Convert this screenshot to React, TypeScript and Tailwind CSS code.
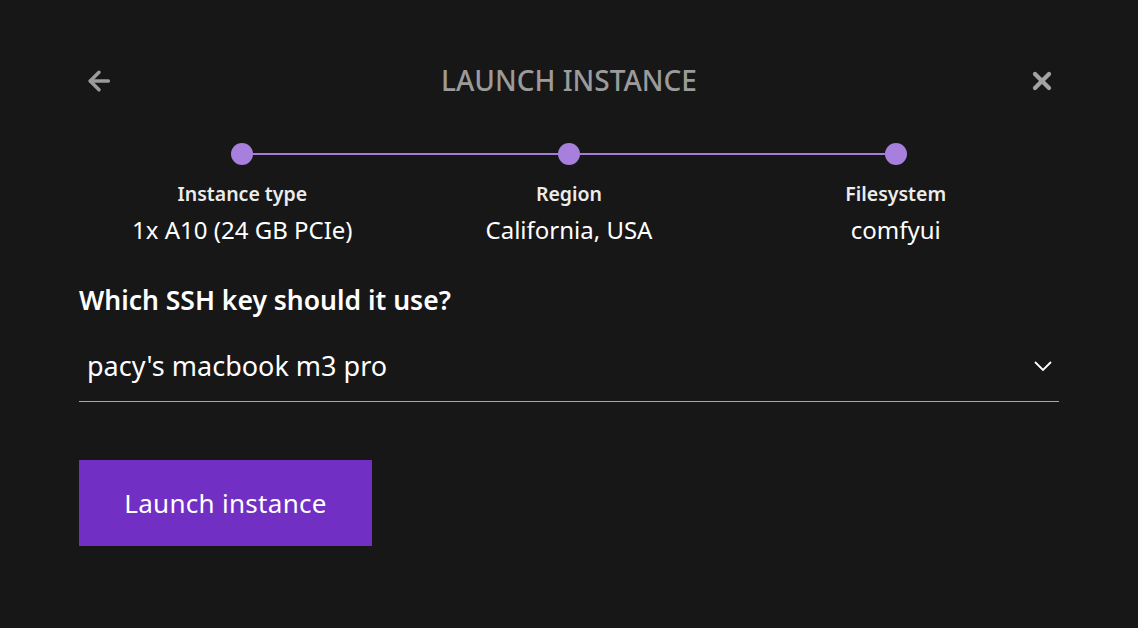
import React from "react";

const steps = [
  { label: "Instance type", value: "1x A10 (24 GB PCIe)" },
  { label: "Region", value: "California, USA" },
  { label: "Filesystem", value: "comfyui" },
];

export default function App() {
  return (
    <div
      className="w-[1138px] h-[628px] bg-[#171717] text-white overflow-hidden"
      style={{ fontFamily: '"Noto Sans", "Open Sans", sans-serif' }}
    >
      <div className="px-[79px] pt-[60px] flex flex-col">
        {/* Header */}
        <div className="h-[42px] flex items-center justify-between">
          <button className="w-[40px] h-[42px] flex items-center justify-start pl-[5px] text-[#9b9b9b]">
            <svg width="30" height="30" viewBox="0 0 24 24" fill="none" stroke="currentColor" strokeWidth="2.8" strokeLinecap="round" strokeLinejoin="round">
              <path d="M19.5 12H5" />
              <path d="M12 19l-7-7 7-7" />
            </svg>
          </button>
          <div className="text-[28px] leading-none font-medium text-[#9b9b9b] mt-[-2px]">LAUNCH INSTANCE</div>
          <button className="w-[40px] h-[42px] flex items-center justify-end pr-[6px] text-[#a3a3a3]">
            <svg width="22" height="22" viewBox="0 0 22 22" fill="none" stroke="currentColor" strokeWidth="4.2" strokeLinecap="round">
              <path d="M4 4L18 18" />
              <path d="M18 4L4 18" />
            </svg>
          </button>
        </div>

        {/* Stepper */}
        <div className="relative mt-[41px] grid grid-cols-3">
          <div className="absolute top-[10px] left-[16.667%] right-[16.667%] h-[2px] bg-[#a57dd8]" />
          {steps.map((s) => (
            <div key={s.label} className="relative flex flex-col items-center">
              <div className="w-[22px] h-[22px] rounded-full bg-[#a77fdc]" />
              <div className="mt-[16px] text-[19.5px] leading-[26px] font-semibold text-[#ececec]">{s.label}</div>
              <div className="mt-[8px] text-[24px] leading-[30px] text-white">{s.value}</div>
            </div>
          ))}
        </div>

        {/* SSH key */}
        <div className="mt-[37px] text-[26.5px] leading-[36px] font-semibold text-white">Which SSH key should it use?</div>
        <div className="mt-[24px] border-b border-[#a8a8a8] flex items-center justify-between pl-[8px] pr-[6px] h-[60px] pb-[12px]">
          <span className="text-[27px] leading-[36px] text-white">pacy's macbook m3 pro</span>
          <svg width="20" height="12" viewBox="0 0 20 12" fill="none" stroke="white" strokeWidth="1.8">
            <path d="M2 2L10 10L18 2" />
          </svg>
        </div>

        {/* Button */}
        <div className="mt-[58px]">
          <button className="w-[293px] h-[86px] bg-[#7130c3] text-white text-[26px] tracking-[0.3px] flex items-center justify-center">
            Launch instance
          </button>
        </div>
      </div>
    </div>
  );
}
